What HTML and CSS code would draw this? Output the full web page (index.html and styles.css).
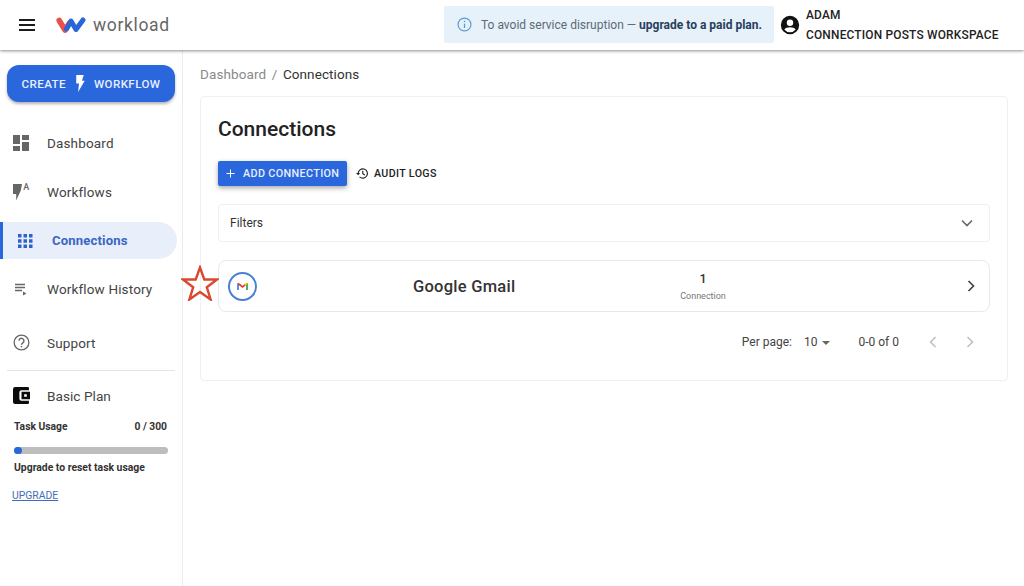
FILE: index.html
```html
<!DOCTYPE html>
<html lang="en">
<head>
<meta charset="utf-8">
<title>Connections</title>
<link rel="stylesheet" href="styles.css">
</head>
<body>
<header class="topbar">
  <svg class="menu-icon" viewBox="0 0 16 12"><path d="M0 1h16M0 6h16M0 11h16" stroke="#1c1c1c" stroke-width="1.8"/></svg>
  <div class="logo">
    <svg class="logo-mark" viewBox="0 0 30 18">
      <path d="M3.200 4.500l5.800 9.500 4.500-7" fill="none" stroke="#e8504a" stroke-width="5.600" stroke-linecap="round" stroke-linejoin="round"/>
      <path d="M10.500 13l4.500-8 5 8.500 7-9.500" fill="none" stroke="#2b66d9" stroke-width="5" stroke-linecap="round" stroke-linejoin="round"/>
    </svg>
    <span class="logo-text">workload</span>
  </div>
  <div class="notice">
    <svg class="notice-icon" viewBox="0 0 14 14"><circle cx="7" cy="7" r="6" fill="none" stroke="#5b9bd5" stroke-width="1.1"/><path d="M7 6.200v4M7 3.600v1.400" stroke="#5b9bd5" stroke-width="1.2"/></svg>
    <span>To avoid service disruption — <b>upgrade to a paid plan.</b></span>
  </div>
  <div class="account">
    <svg class="account-icon" viewBox="0 0 24 24"><path fill="#111" d="M12 2a10 10 0 1 0 0 20 10 10 0 0 0 0-20zm0 4a3.500 3.500 0 1 1 0 7 3.500 3.500 0 0 1 0-7zm0 14a8 8 0 0 1-6.200-3c.9-1.700 3.900-2.600 6.200-2.600s5.300.9 6.200 2.600A8 8 0 0 1 12 20z"/></svg>
    <div class="account-text"><div>ADAM</div><div>CONNECTION POSTS WORKSPACE</div></div>
  </div>
</header>

<div class="shell">
  <aside class="sidebar">
    <button class="create-btn">CREATE
      <svg class="bolt" viewBox="0 0 10 18"><path fill="#fff" d="M1 0h8L7 6h3L3 18l1-9H1z"/></svg>
      WORKFLOW</button>
    <nav class="nav">
      <a class="nav-item">
        <svg class="nav-icon" viewBox="0 0 16 16"><path fill="#666" d="M0 0h7v9H0zM9 0h7v5H9zM9 7h7v9H9zM0 11h7v5H0z"/></svg>
        <span>Dashboard</span>
      </a>
      <a class="nav-item">
        <svg class="nav-icon" viewBox="0 0 16 16"><path fill="#666" d="M0 0h9L7.800 6.500 3.200 16.500V10H0z"/><text x="10.200" y="6" class="sup">A</text></svg>
        <span>Workflows</span>
      </a>
      <a class="nav-item active">
        <svg class="nav-icon grid-icon" viewBox="0 0 15 14"><path fill="#2f62c9" d="M0 0h3.500v3.500H0zM5.500 0H9v3.500H5.500zM11 0h3.500v3.500H11zM0 5.200h3.500v3.500H0zM5.500 5.200H9v3.500H5.500zM11 5.200h3.500v3.500H11zM0 10.400h3.500v3.500H0zM5.500 10.400H9v3.500H5.500zM11 10.400h3.500v3.500H11z"/></svg>
        <span>Connections</span>
      </a>
      <a class="nav-item">
        <svg class="nav-icon" viewBox="0 0 16 16"><path fill="none" stroke="#666" stroke-width="1.300" d="M2 3.500h10M2 6.500h10M2 9.500h7"/><path fill="#666" d="M10 10.500l3.500 2-3.500 2z"/></svg>
        <span>Workflow History</span>
      </a>
      <a class="nav-item support">
        <svg class="nav-icon big" viewBox="0 0 18 18"><circle cx="9" cy="9" r="7.800" fill="none" stroke="#666" stroke-width="1.400"/><path fill="none" stroke="#666" stroke-width="1.500" d="M6.400 7.200a2.600 2.600 0 1 1 4.200 2c-1 .8-1.600 1.200-1.600 2.300"/><path stroke="#666" stroke-width="1.500" d="M9 12.600v1.600"/></svg>
        <span>Support</span>
      </a>
    </nav>
    <div class="plan">
      <div class="plan-title">
        <svg class="nav-icon big" viewBox="0 0 16 16"><path fill="#0c0c0c" d="M2 0h12a1 1 0 0 1 1 1v2H8a2 2 0 0 0-2 2v6a2 2 0 0 0 2 2h7v2a1 1 0 0 1-1 1H2a2 2 0 0 1-2-2V2a2 2 0 0 1 2-2z"/><path fill="#0c0c0c" fill-rule="evenodd" d="M8 4.500h8v7H8zM10.500 6.800v2.400h2.500V6.800z"/></svg>
        <span>Basic Plan</span>
      </div>
      <div class="usage-row"><span>Task Usage</span><span>0 / 300</span></div>
      <div class="usage-bar"><div class="usage-fill"></div></div>
      <div class="usage-note">Upgrade to reset task usage</div>
      <a class="upgrade-link">UPGRADE</a>
    </div>
  </aside>

  <main class="main">
    <div class="crumbs"><span class="crumb-muted">Dashboard</span><span class="crumb-sep">/</span><span>Connections</span></div>
    <section class="card">
      <h1 class="title">Connections</h1>
      <div class="actions">
        <button class="add-btn"><svg class="plus" viewBox="0 0 10 10"><path d="M5 .5v9M.5 5h9" stroke="#fff" stroke-width="1.100"/></svg>ADD CONNECTION</button>
        <button class="audit-btn"><svg class="history" viewBox="0 0 14 14"><path fill="none" stroke="#222" stroke-width="1.200" d="M2.300 7a5 5 0 1 1 1.500 3.600M7.300 4v3.300l2.300 1.300"/><path fill="#222" d="M0 6.500h4.500L2.300 9z"/></svg>AUDIT LOGS</button>
      </div>
      <div class="filters"><span>Filters</span><svg class="chev-down" viewBox="0 0 12 8"><path d="M1 1.500l5 5 5-5" fill="none" stroke="#666" stroke-width="1.600"/></svg></div>
      <div class="conn-row">
        <div class="gmail-badge">
          <svg class="gmail" viewBox="0 0 12 10">
            <path d="M1 9V1.500" stroke="#4285f4" stroke-width="2" fill="none"/>
            <path d="M11 9V1.500" stroke="#34a853" stroke-width="2" fill="none"/>
            <path d="M1 1.500L3.500 3.500" stroke="#ea4335" stroke-width="2" fill="none"/>
            <path d="M3 3l3 2.500L9 3" stroke="#ea4335" stroke-width="2" fill="none"/>
            <path d="M8.500 3.500L11 1.500" stroke="#fbbc04" stroke-width="2" fill="none"/>
          </svg>
        </div>
        <div class="conn-name">Google Gmail</div>
        <div class="conn-count"><div class="count-num">1</div><div class="count-label">Connection</div></div>
        <svg class="chev-right" viewBox="0 0 8 12"><path d="M1.500 1l5 5-5 5" fill="none" stroke="#444" stroke-width="1.700"/></svg>
      </div>
      <div class="pager">
        <span>Per page:</span>
        <span class="per-value">10<i class="caret"></i></span>
        <span class="range">0-0 of 0</span>
        <svg class="pg-arrow" viewBox="0 0 8 12"><path d="M6.500 1l-5 5 5 5" fill="none" stroke="#bdbdbd" stroke-width="1.500"/></svg>
        <svg class="pg-arrow" viewBox="0 0 8 12"><path d="M1.500 1l5 5-5 5" fill="none" stroke="#bdbdbd" stroke-width="1.500"/></svg>
      </div>
    </section>
  </main>
</div>

<svg class="star" viewBox="0 0 38 36"><path d="M19 2.500l4.300 12h12.700l-10.200 7.700 3.800 12.300L19 27l-10.600 7.500 3.800-12.300L2 14.500h12.700z" fill="none" stroke="#d8492f" stroke-width="2.400"/></svg>
</body>
</html>
```
FILE: styles.css
```css
* { box-sizing: border-box; }
html, body { margin: 0; height: 100%; }
body {
  position: relative;
  width: 1024px;
  height: 586px;
  overflow: hidden;
  background: #fff;
  color: #222;
  font-family: Roboto, "Liberation Sans", sans-serif;
  display: flex;
  flex-direction: column;
}
.topbar {
  height: 50px;
  flex: none;
  display: flex;
  align-items: center;
  padding-left: 19px;
  box-shadow: 0 1px 3px rgba(0,0,0,.45);
  position: relative;
  z-index: 2;
  background: #fff;
}
.menu-icon { width: 16px; height: 12px; }
.logo { display: flex; align-items: center; margin-left: 21px; }
.logo-mark { width: 30px; height: 18px; }
.logo-text { margin-left: 7px; font-size: 17.500px; font-weight: 400; color: #666; letter-spacing: .65px; }
.notice {
  margin-left: auto;
  width: 330px;
  height: 37px;
  margin-top: -1px;
  display: flex;
  align-items: center;
  padding-left: 13px;
  background: #e6f1fa;
  border-radius: 2px;
  font-size: 12px;
  color: #5b6b78;
}
.notice b { font-weight: 700; color: #27405c; }
.notice-icon { width: 15px; height: 15px; margin-right: 9px; }
.account { display: flex; align-items: center; margin-left: 5px; width: 245px; }
.account-icon { width: 22px; height: 22px; flex: none; }
.account-text { margin-left: 5px; font-size: 11.900px; font-weight: 500; color: #222; line-height: 20px; letter-spacing: .2px; }
.shell { flex: 1; display: flex; min-height: 0; }
.sidebar {
  width: 183px;
  flex: none;
  border-right: 1px solid #ececec;
  padding-top: 15px;
}
.create-btn {
  margin-left: 7px;
  width: 168px;
  height: 37px;
  border: 0;
  border-radius: 12px;
  background: #2a66dc;
  color: #e8effc;
  font: 500 11.600px Roboto, sans-serif;
  letter-spacing: .4px;
  display: flex;
  align-items: center;
  justify-content: center;
  gap: 9px;
  box-shadow: 0 2px 3px rgba(0,0,0,.3);
}
.bolt { width: 10px; height: 17px; }
.nav { margin-top: 22px; }
.nav-item {
  height: 38px;
  margin-bottom: 10.700px;
  display: flex;
  align-items: center;
  padding-left: 13px;
  font-size: 13.500px;
  color: #444;
  letter-spacing: .15px;
}
.nav-icon { width: 16px; height: 16px; margin-right: 18px; flex: none; overflow: visible; }
.nav-icon.big { width: 17px; height: 17px; margin-right: 17px; }
.sup { font: 500 9px Roboto, sans-serif; fill: #666; }
.nav-item.active {
  width: 177px;
  height: 37px;
  margin-top: 11.700px;
  background: #e8eefa;
  border-left: 3px solid #2a66dc;
  border-radius: 0 19px 19px 0;
  padding-left: 15px;
  color: #3a66c4;
  font-weight: 700;
  font-size: 13.100px;
}
.nav-icon.grid-icon { width: 15px; height: 14px; margin-right: 19px; }
.support { margin-top: 21px; margin-bottom: 0; height: 27px; }
.plan { margin: 14px 7px 0 7px; border-top: 1px solid #e4e4e4; }
.plan-title {
  height: 25px;
  margin-top: 12px;
  margin-left: 6px;
  display: flex;
  align-items: center;
  font-size: 13.700px;
  color: #444;
}
.usage-row {
  margin: 12px 8px 0 7px;
  display: flex;
  justify-content: space-between;
  font-size: 10.300px;
  font-weight: 700;
  color: #333;
  line-height: 14px;
}
.usage-bar { margin: 13px 7px 0 7px; height: 7px; border-radius: 4px; background: #bdbdbd; }
.usage-fill { width: 8px; height: 7px; border-radius: 4px; background: #2a66dc; }
.usage-note { margin: 7px 0 0 7px; font-size: 10.400px; font-weight: 700; color: #333; line-height: 14px; }
.upgrade-link {
  display: block;
  margin: 14px 0 0 5px;
  font-size: 10.400px;
  color: #3f6db8;
  text-decoration: underline;
  line-height: 14px;
}
.main { flex: 1; padding: 16px 16px 0 17px; min-width: 0; }
.crumbs { font-size: 13.500px; line-height: 17px; display: flex; color: #333; letter-spacing: .1px; }
.crumb-muted { color: #8a8a8a; }
.crumb-sep { margin: 0 5.500px; color: #8a8a8a; }
.card {
  margin-top: 13px;
  height: 285px;
  border: 1px solid #f0f0f0;
  border-radius: 4px;
  padding: 19px 17px 0 17px;
}
.title { margin: 0; font-size: 21px; font-weight: 500; line-height: 26px; color: #222; }
.actions { margin-top: 19px; display: flex; align-items: center; height: 25px; }
.add-btn {
  width: 129px;
  height: 25px;
  border: 0;
  border-radius: 2px;
  background: #2a66dc;
  color: #e8effc;
  font: 500 10.800px Roboto, sans-serif;
  letter-spacing: .35px;
  display: flex;
  align-items: center;
  padding: 0 0 0 8px;
  box-shadow: 0 2px 5px rgba(0,0,0,.35);
}
.plus { width: 9px; height: 9px; margin-right: 8px; }
.audit-btn {
  margin-left: 9px;
  border: 0;
  background: none;
  padding: 0;
  color: #222;
  font: 500 10.700px Roboto, sans-serif;
  letter-spacing: .35px;
  display: flex;
  align-items: center;
}
.history { width: 13px; height: 13px; margin-right: 5px; }
.filters {
  margin-top: 18px;
  height: 38px;
  border: 1px solid #f0f0f0;
  border-radius: 4px;
  display: flex;
  align-items: center;
  justify-content: space-between;
  padding: 0 16px 0 11px;
  font-size: 12px;
  color: #333;
}
.chev-down { width: 12px; height: 8px; }
.conn-row {
  margin-top: 18px;
  height: 52px;
  border: 1px solid #e8e8e8;
  border-radius: 8px;
  display: flex;
  align-items: center;
  padding-left: 9px;
  position: relative;
}
.gmail-badge {
  width: 29px;
  height: 29px;
  border: 2px solid #4a80d6;
  border-radius: 50%;
  display: flex;
  align-items: center;
  justify-content: center;
  flex: none;
}
.gmail { width: 11px; height: 9px; }
.conn-name { margin-left: 156px; width: 196px; font-size: 16.500px; font-weight: 500; color: #333; letter-spacing: .25px; }
.conn-count { width: 124px; text-align: center; margin-left: 32px; }
.count-num { font-size: 12.500px; font-weight: 500; color: #333; line-height: 17px; }
.count-label { font-size: 9px; color: #777; line-height: 12px; margin-top: 3px; }
.chev-right { width: 8px; height: 12px; margin-left: auto; margin-right: 14px; }
.pager {
  margin-top: 20px;
  display: flex;
  align-items: center;
  justify-content: flex-end;
  font-size: 12px;
  color: #444;
  height: 20px;
  padding-right: 16px;
}
.per-value { margin-left: 12px; display: flex; align-items: center; }
.caret {
  margin-left: 5px;
  margin-top: 2px;
  border-left: 4px solid transparent;
  border-right: 4px solid transparent;
  border-top: 4px solid #666;
}
.range { margin-left: 28px; margin-right: 30px; }
.pg-arrow { width: 8px; height: 12px; margin-left: 0; }
.pg-arrow + .pg-arrow { margin-left: 29px; }
.star { position: absolute; left: 181px; top: 265px; width: 38px; height: 36px; }
```
